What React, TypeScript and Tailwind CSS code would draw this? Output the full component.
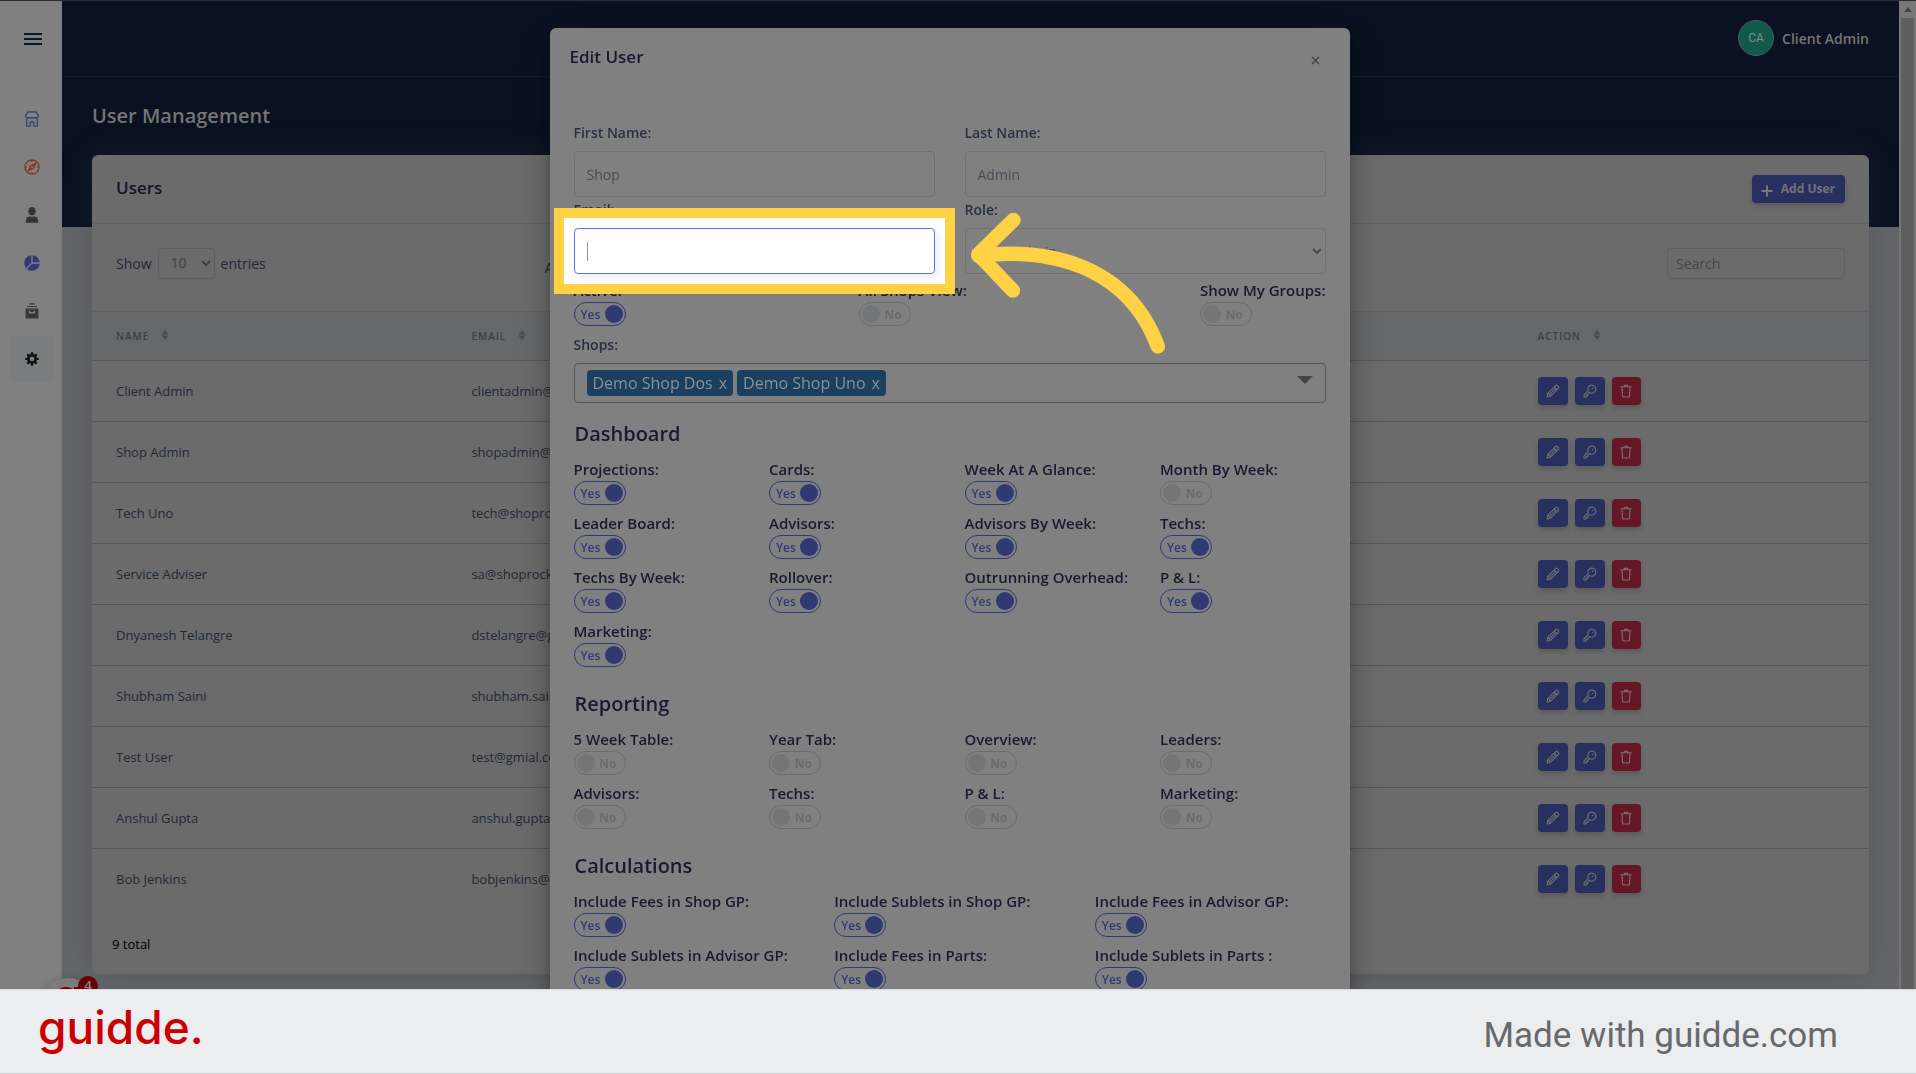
import React from 'react';

type ToggleItem = { label: string; on: boolean };

const users = [
  ['Client Admin', 'clientadmin@'],
  ['Shop Admin', 'shopadmin@'],
  ['Tech Uno', 'tech@shoproc'],
  ['Service Adviser', 'sa@shoprock'],
  ['Dnyanesh Telangre', 'dstelangre@g'],
  ['Shubham Saini', 'shubham.saini'],
  ['Test User', 'test@gmial.co'],
  ['Anshul Gupta', 'anshul.gupta'],
  ['Bob Jenkins', 'bobjenkins@'],
];

const access: ToggleItem[] = [
  { label: 'Active:', on: true },
  { label: 'All Shops View:', on: false },
  { label: 'Show My Groups:', on: false },
];

const yes = (label: string): ToggleItem => ({ label, on: true });
const no = (label: string): ToggleItem => ({ label, on: false });

const dashboard = [
  yes('Projections:'), yes('Cards:'), yes('Week At A Glance:'), no('Month By Week:'),
  yes('Leader Board:'), yes('Advisors:'), yes('Advisors By Week:'), yes('Techs:'),
  yes('Techs By Week:'), yes('Rollover:'), yes('Outrunning Overhead:'), yes('P & L:'),
  yes('Marketing:'),
];

const reporting = [
  no('5 Week Table:'), no('Year Tab:'), no('Overview:'), no('Leaders:'),
  no('Advisors:'), no('Techs:'), no('P & L:'), no('Marketing:'),
];

const calculations = [
  yes('Include Fees in Shop GP:'), yes('Include Sublets in Shop GP:'), yes('Include Fees in Advisor GP:'),
  yes('Include Sublets in Advisor GP:'), yes('Include Fees in Parts:'), yes('Include Sublets in Parts :'),
];

function ShopIcon() {
  return (
    <svg width="16" height="16" viewBox="0 0 16 16" fill="none" stroke="#343d78" strokeWidth="1.2">
      <path d="M4 .8h8l2.400 3.600v.4L13.400 6.800H2.600L1.600 4.800v-.4z" />
      <path d="M2 6.200l1.500 1 1.500-1 1.500 1 1.500-1 1.500 1 1.500-1 1.500 1 1.500-1" strokeWidth="1" />
      <path d="M2.800 7.200v8h3.400v-4.400h3.600v4.400h3.400v-8" />
    </svg>
  );
}

function CompassIcon() {
  return (
    <svg width="16" height="16" viewBox="0 0 16 16" fill="none" stroke="#8a3424" strokeWidth="1.3">
      <circle cx="8" cy="8" r="7" />
      <path d="M8 1v2M8 13v2M1 8h2M13 8h2" />
      <path d="M11.6 4.4 9.3 9.3 4.4 11.6 6.7 6.7z" fill="#8a3424" />
      <circle cx="8" cy="8" r=".9" fill="#808080" stroke="none" />
    </svg>
  );
}

function PersonIcon() {
  return (
    <svg width="16" height="16" viewBox="0 0 16 16" fill="#333">
      <ellipse cx="8" cy="4.2" rx="3.6" ry="4.1" />
      <path d="M1.7 15.4c0-3.6 1-5.8 4-6.2 1.5.8 3.1.8 4.6 0 3 .4 4 2.6 4 6.2-1.3.5-11.3.5-12.6 0z" />
    </svg>
  );
}

function PieIcon() {
  return (
    <svg width="16" height="16" viewBox="0 0 16 16">
      <circle cx="8" cy="8" r="7.8" fill="#2f3a78" />
      <path d="M8 0v8h8M8 8l-5.6 5.6" fill="none" stroke="#808080" strokeWidth="1.3" />
    </svg>
  );
}

function ArchiveIcon() {
  return (
    <svg width="16" height="16" viewBox="0 0 16 16" fill="#383838">
      <path d="M5 .3h6v1.1H5zM3 2.9h10V4H3z" />
      <path fillRule="evenodd" d="M1.6 5.4h12.8v10H1.600zM5 7.400v3h6v-3H9.700v1.500H6.300V7.400z" />
    </svg>
  );
}

function GearIcon() {
  return (
    <svg width="16" height="16" viewBox="0 0 16 16" fill="none" stroke="#0c0c0c">
      <circle cx="8" cy="8" r="3.7" strokeWidth="2.6" />
      <path
        strokeWidth="2.2"
        d="M8 1.300v2M8 12.700v2M1.300 8h2M12.700 8h2M3.300 3.300l1.400 1.400M11.300 11.300l1.400 1.400M3.300 12.700l1.400-1.400M11.300 4.700l1.400-1.400"
      />
    </svg>
  );
}

const nav = [
  { name: 'Shops', icon: <ShopIcon /> },
  { name: 'Explore', icon: <CompassIcon /> },
  { name: 'Profile', icon: <PersonIcon /> },
  { name: 'Reports', icon: <PieIcon /> },
  { name: 'Archive', icon: <ArchiveIcon /> },
  { name: 'Settings', icon: <GearIcon />, active: true },
];

function Sidebar() {
  return (
    <aside className="flex w-[62px] shrink-0 flex-col items-center border-r border-[#7a7a7a] bg-[#808080] pl-0.5">
      <button aria-label="Menu" className="ml-0.5 mt-8 flex w-[18px] flex-col gap-[3px]">
        <span className="h-0.5 w-full bg-[#0c1626]" />
        <span className="h-0.5 w-full bg-[#0c1626]" />
        <span className="h-0.5 w-full bg-[#0c1626]" />
      </button>
      <nav className="mt-[51px] flex flex-col gap-0.5">
        {nav.map((n) => (
          <a
            key={n.name}
            href="#"
            aria-label={n.name}
            className={
              n.active
                ? 'flex h-[46px] w-[46px] items-center justify-center rounded-md bg-[#7a7c7e]'
                : 'flex h-[46px] w-[46px] items-center justify-center rounded-md'
            }
          >
            {n.icon}
          </a>
        ))}
      </nav>
    </aside>
  );
}

function SortIcon() {
  return (
    <svg width="8" height="10" viewBox="0 0 8 10" fill="#4a4d52" className="mb-0.5">
      <path d="M4 0 7.600 4.400H.4zM.4 5.600h7.200L4 10z" />
    </svg>
  );
}

function PencilIcon() {
  return (
    <svg width="14" height="14" viewBox="0 0 14 14" fill="none" stroke="#6f6f77" strokeWidth="1.1" strokeLinejoin="round">
      <path d="M1 13l.8-3.600 7.800-7.800a1.300 1.300 0 0 1 1.800 0l1 1a1.300 1.300 0 0 1 0 1.800l-7.800 7.800z" />
      <path d="M3.400 10.600l6.800-6.800M1.800 9.400l2.800 2.800M8.200 3l2.800 2.800" />
    </svg>
  );
}

function KeyIcon() {
  return (
    <svg width="14" height="14" viewBox="0 0 14 14" fill="none" stroke="#6f6f77" strokeWidth="1.1" strokeLinejoin="round">
      <path d="M8.900 1a4.100 4.100 0 0 0-3.700 5.700L1 11v2h2.300v-1.600h1.500V9.800l1.500-1.400A4.100 4.100 0 1 0 8.900 1z" />
      <circle cx="9.800" cy="4.200" r=".8" fill="#6f6f77" stroke="none" />
    </svg>
  );
}

function TrashIcon() {
  return (
    <svg width="14" height="14" viewBox="0 0 14 14" fill="none" stroke="#7f6f73" strokeWidth="1.1" strokeLinecap="round" strokeLinejoin="round">
      <path d="M1.800 2.800h10.400M5 2.600c0-2 4-2 4 0M3 3l.5 9c0 .7.4 1 1 1h5c.6 0 1-.3 1-1l.5-9" />
    </svg>
  );
}

const actionBtn = 'flex h-7 items-center justify-center rounded shadow-[0_3px_5px_rgba(0,0,0,0.16)]';
const thCell = 'h-[49px] px-6 text-left align-middle text-[10px] font-semibold uppercase tracking-[1px] text-[#394047]';

function UsersCard() {
  return (
    <section className="relative rounded-md bg-[#6b6b6b] shadow-[0_0_32px_rgba(40,50,62,0.3)]">
      <div className="flex h-[69px] items-center justify-between border-b border-[#636363] px-6">
        <h2 className="pb-0.5 text-[17px] font-semibold text-[#151527]">Users</h2>
        <button className="flex h-7 items-center gap-2 rounded bg-[#27305f] pl-[9px] pr-2.5 text-xs font-bold text-[#737373] shadow-[0_3px_5px_rgba(0,0,0,0.16)]">
          <svg width="12" height="12" viewBox="0 0 12 12" stroke="#777" strokeWidth="2" className="mt-1">
            <path d="M6 .5v11M.5 6h11" />
          </svg>
          <span>Add User</span>
        </button>
      </div>
      <div className="flex h-[87px] items-start px-6 pt-6 text-sm">
        <label className="flex items-center gap-1.5 text-[#222835]">
          Show
          <select
            defaultValue="10"
            className="h-[31px] w-[57px] rounded border border-[#5d5f60] bg-[#6b6b6b] px-2 pb-0.5 text-sm text-[#394047]"
          >
            <option>10</option>
            <option>25</option>
          </select>
          entries
        </label>
        <span className="ml-[279px] mt-2.5 leading-5 text-[#222835]">All</span>
        <input
          type="search"
          aria-label="Search"
          placeholder="Search"
          className="ml-auto h-[31px] w-[178px] rounded border border-[#5d5f60] bg-[#6b6b6b] px-2 text-sm placeholder:text-[#41464c]"
        />
      </div>
      <table className="w-full table-fixed border-collapse">
        <thead>
          <tr className="border-y border-t-[#606164] border-b-[#54575c] bg-[#67686a]">
            <th className={thCell}>
              <span className="flex items-center gap-3">Name <SortIcon /></span>
            </th>
            <th className={thCell}>
              <span className="flex items-center gap-3">Email <SortIcon /></span>
            </th>
            <th />
            <th />
            <th className={thCell}>
              <span className="flex items-center gap-3">Action <SortIcon /></span>
            </th>
          </tr>
        </thead>
        <tbody>
          {users.map(([name, email]) => (
            <tr key={name} className="h-[61px] border-b border-[#54575c] text-[13px] text-[#222835] last:border-b-0">
              <td className="px-6 pt-px">{name}</td>
              <td className="px-6 pt-px">{email}</td>
              <td />
              <td />
              <td className="px-6">
                <div className="flex gap-[7px]">
                  <button aria-label="Edit" className={actionBtn + ' w-[30px] bg-[#27305f]'}><PencilIcon /></button>
                  <button aria-label="Reset password" className={actionBtn + ' w-[30px] bg-[#27305f]'}><KeyIcon /></button>
                  <button aria-label="Delete" className={actionBtn + ' w-[29px] bg-[#661726]'}><TrashIcon /></button>
                </div>
              </td>
            </tr>
          ))}
        </tbody>
      </table>
      <p className="px-5 pb-5 pt-6 text-[13px] leading-5 text-black">9 total</p>
    </section>
  );
}

function Toggle({ label, on }: ToggleItem) {
  return (
    <label className="flex flex-col items-start">
      <span className="whitespace-nowrap text-[15px] font-semibold leading-6 text-[#19192f]">{label}</span>
      <input type="checkbox" defaultChecked={on} className="peer sr-only" />
      {on ? (
        <span className="flex h-6 w-[52px] items-center justify-between rounded-full border border-[#2f3972] pl-1.5 pr-0.5 text-xs font-semibold text-[#2f3972]">
          <span className="pt-0.5">Yes</span>
          <span className="h-[18px] w-[18px] rounded-full bg-[#2f3972]" />
        </span>
      ) : (
        <span className="flex h-6 w-[52px] items-center justify-between rounded-full border border-[#6a6c6e] pl-0.5 pr-2 text-xs font-bold text-[#696b6e]">
          <span className="h-[18px] w-[18px] rounded-full bg-[#737577]" />
          <span className="pt-0.5">No</span>
        </span>
      )}
    </label>
  );
}

function ToggleSection({ title, items, three }: { title: string; items: ToggleItem[]; three?: boolean }) {
  return (
    <section>
      <h3 className="mb-2 pl-px text-xl font-semibold leading-[30px] text-[#19192f]">{title}</h3>
      <div className={three ? 'grid grid-cols-3 gap-x-[30px] gap-y-1.5' : 'grid grid-cols-4 gap-x-[30px] gap-y-1.5'}>
        {items.map((t) => (
          <Toggle key={t.label} {...t} />
        ))}
      </div>
    </section>
  );
}

const fieldLabel = 'mb-2 block text-sm font-semibold leading-5 text-[#293040]';
const field = 'block h-[46px] w-full rounded border border-[#6f7173] bg-[#808080] text-sm text-[#444c55]';

function Tag({ name }: { name: string }) {
  return (
    <span className="flex h-[26px] items-center gap-1.5 rounded-sm bg-[#1b3f5e] px-1.5 text-base text-[#8f8f8f]">
      {name}
      <button type="button" aria-label={'Remove ' + name}>x</button>
    </span>
  );
}

function EditUserDialog() {
  return (
    <div
      role="dialog"
      aria-label="Edit User"
      className="w-[800px] rounded-md bg-[#808080] shadow-[0_15px_35px_rgba(0,0,0,0.25),0_5px_15px_rgba(0,0,0,0.2)]"
    >
      <div className="flex h-[95px] items-start justify-between px-5 pt-4">
        <h2 className="text-[17px] font-semibold leading-[26px] text-[#19192f]">Edit User</h2>
        <button aria-label="Close" className="mr-2.5 mt-3">
          <svg width="9" height="9" viewBox="0 0 9 9" stroke="#484848" strokeWidth="1.5">
            <path d="M1 1l7 7M8 1L1 8" />
          </svg>
        </button>
      </div>
      <form className="px-6 pb-10">
        <div className="grid grid-cols-2 gap-x-[30px] gap-y-[3px]">
          <div>
            <label htmlFor="first" className={fieldLabel}>First Name:</label>
            <input id="first" defaultValue="Shop" className={field + ' px-3'} />
          </div>
          <div>
            <label htmlFor="last" className={fieldLabel}>Last Name:</label>
            <input id="last" defaultValue="Admin" className={field + ' px-3'} />
          </div>
          <div>
            <label htmlFor="email" className={fieldLabel}>Email:</label>
            <div className="relative z-10">
              <div className="absolute -inset-5 border-10 border-[#ffd144] bg-white" />
              <input
                id="email"
                type="email"
                className="relative block h-[46px] w-full rounded border border-[#5e72e4] bg-white px-3 text-sm text-[#8898aa] shadow-[3px_4px_8px_rgba(94,114,228,0.12)]"
              />
              <span className="absolute left-[13px] top-3.5 h-[19px] w-px bg-[#8898aa]" />
            </div>
          </div>
          <div>
            <label htmlFor="role" className={fieldLabel}>Role:</label>
            <div className="relative">
              <select id="role" defaultValue="Shop Admin" className={field + ' px-2'}>
                <option>Shop Admin</option>
                <option>Client Admin</option>
              </select>
              <svg
                width="300"
                height="220"
                viewBox="0 0 300 220"
                fill="none"
                stroke="#ffd144"
                strokeWidth="14.5"
                strokeLinecap="round"
                strokeLinejoin="round"
                className="pointer-events-none absolute -left-[45px] -top-[38px] z-20"
              >
                <path d="M93.500 30 58.300 64.300 92.800 100.500" />
                <path d="M58.300 65.500C146 56 212 86 237.800 156.500" />
              </svg>
            </div>
          </div>
        </div>
        <div className="mt-1 flex justify-between">
          {access.map((t) => (
            <Toggle key={t.label} {...t} />
          ))}
        </div>
        <div className="mb-4 mt-[9px]">
          <span className={fieldLabel}>Shops:</span>
          <div className="flex h-10 items-center gap-1 rounded border border-[#555] px-3">
            <Tag name="Demo Shop Dos" />
            <Tag name="Demo Shop Uno" />
            <button type="button" aria-label="Open shops" className="ml-auto mb-1.5">
              <svg width="16" height="8" viewBox="0 0 16 8" fill="#444">
                <path d="M0 0h16L8 8z" />
              </svg>
            </button>
          </div>
        </div>
        <div className="flex flex-col gap-[22px]">
          <ToggleSection title="Dashboard" items={dashboard} />
          <ToggleSection title="Reporting" items={reporting} />
          <ToggleSection title="Calculations" items={calculations} three />
        </div>
      </form>
    </div>
  );
}

function Scrollbar() {
  return (
    <div className="flex w-[17px] shrink-0 flex-col items-center bg-[#777]">
      <div className="flex h-[17px] items-center">
        <svg width="8" height="5" viewBox="0 0 8 5" fill="#444">
          <path d="M4 0l4 5H0z" />
        </svg>
      </div>
      <div className="w-[13px] flex-1 bg-[#5f5f5f]" />
    </div>
  );
}

export default function App() {
  return (
    <div className="relative flex h-screen overflow-hidden border-t border-[#2c2c34] bg-[#656669] font-['Open_Sans',sans-serif]">
      <Sidebar />
      <main className="relative min-w-0 flex-1">
        <div className="absolute inset-x-0 top-0 h-[226px] bg-[#0a1120]" />
        <header className="relative flex h-[76px] items-center justify-end gap-2 border-b border-[#141b2a] px-[30px] pb-0.5">
          <span className="flex h-9 w-9 items-center justify-center rounded-full border border-[#4a5a60] bg-[#0f5a4b] font-[Roboto,sans-serif] text-xs text-[#7c8f8b]">
            CA
          </span>
          <span className="pt-0.5 text-sm font-semibold text-[#757575]">Client Admin</span>
        </header>
        <div className="relative px-[30px] pt-5">
          <h1 className="mb-5 text-xl font-semibold leading-[38px] text-[#757575]">User Management</h1>
          <UsersCard />
        </div>
      </main>
      <Scrollbar />

      <div className="fixed inset-y-0 left-0 right-[17px] flex items-start justify-center pt-7">
        <EditUserDialog />
      </div>

      <button
        aria-label="Open guides"
        className="fixed bottom-10 left-10 h-14 w-14 rounded-full bg-[#7c7c7c] shadow-[0_2px_8px_rgba(0,0,0,0.3)]"
      >
        <svg width="56" height="56" viewBox="0 0 56 56" fill="none" stroke="#760000" strokeWidth="5">
          <circle cx="26" cy="21" r="9.5" />
          <path d="M36.500 9v22a10 10 0 0 1-17 6" />
        </svg>
        <span className="absolute -right-0.5 -top-0.5 flex h-5 w-5 items-center justify-center rounded-full bg-[#660000] text-sm font-semibold text-[#8a8a8a]">
          4
        </span>
      </button>

      <footer className="fixed inset-x-0 bottom-0 z-30 flex h-[85px] items-center justify-between border-y border-t-[#d8d9db] border-b-[#d2d3d5] bg-[#ecedef] pl-[38px] pr-[78px]">
        <span className="mb-2.5 font-[Inter,sans-serif] text-[46px] font-medium leading-none text-[#cb0000]">guidde.</span>
        <span className="mt-2.5 font-[Roboto,sans-serif] text-[35px] text-[#67696b]">Made with guidde.com</span>
      </footer>
    </div>
  );
}
